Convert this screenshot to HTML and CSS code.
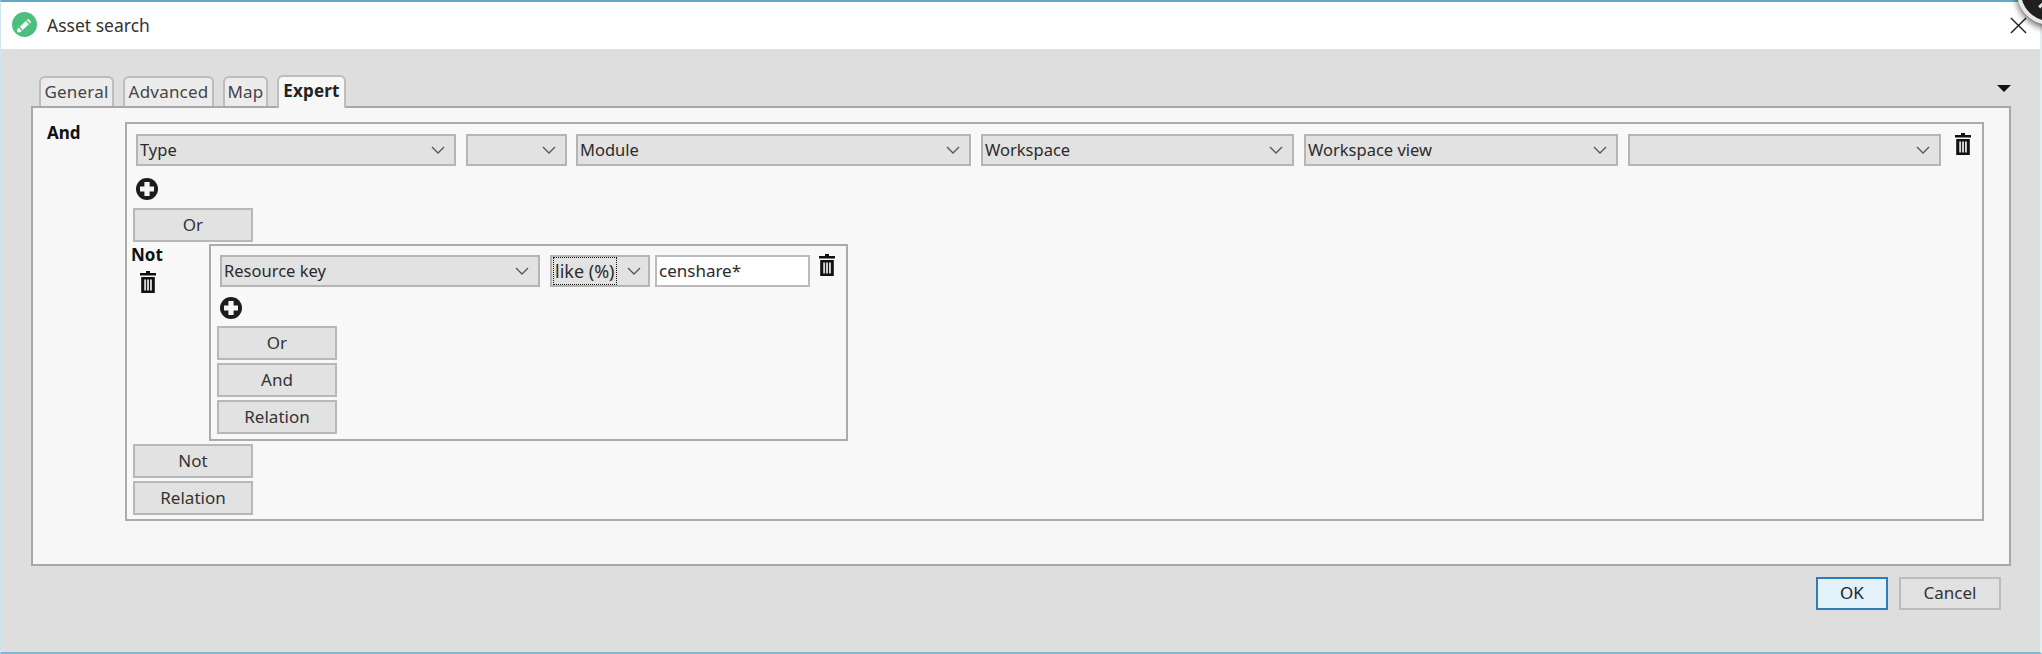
FILE: index.html
```html
<!DOCTYPE html>
<html lang="en">
<head>
<meta charset="utf-8">
<title>Asset search</title>
<link rel="stylesheet" href="styles.css">
</head>
<body>
<svg class="sprites" width="0" height="0" aria-hidden="true">
  <symbol id="trash" viewBox="0 0 18 22">
    <path d="M7 0h4v2h6v2.6H1V2h6z" fill="#111"/>
    <path d="M2.2 6h13.6v16H2.2z" fill="#111"/>
    <path d="M5.2 8.6h1.9v11H5.2zM8.1 8.6h1.9v11H8.1zM11 8.6h1.9v11H11z" fill="#d9d9d9"/>
  </symbol>
  <symbol id="plus" viewBox="0 0 22 22">
    <circle cx="11" cy="11" r="11" fill="#1c1c1c"/>
    <path d="M8.4 4h5.2v4.4H18v5.2h-4.4V18H8.4v-4.4H4V8.4h4.4z" fill="#f5f5f5"/>
  </symbol>
  <symbol id="chev" viewBox="0 0 14 8">
    <path d="M1 1l6 6 6-6" fill="none" stroke="#555" stroke-width="1.3"/>
  </symbol>
</svg>
<div class="badge"><span class="badge-mark"></span></div>
<main class="window">
  <header class="titlebar">
    <svg class="app-icon" viewBox="0 0 24 24" aria-hidden="true">
      <circle cx="12" cy="12" r="12" fill="#4cbf7f"/>
      <path d="M5 16.5 15.5 6.5l3 3L8 19.5H5z" fill="#f4fbf6"/>
      <path d="M13.8 8.2l3 3" stroke="#4cbf7f" stroke-width="1.4"/>
      <path d="M7 14.6l2.8 3" stroke="#6a8a78" stroke-width="1"/>
    </svg>
    <span class="title">Asset search</span>
    <svg class="close" viewBox="0 0 18 18" aria-hidden="true"><path d="M1 1l16 16M17 1L1 17" stroke="#222" stroke-width="1.5"/></svg>
  </header>
  <section class="content">
    <nav class="tabs">
      <span class="tab tab-general">General</span>
      <span class="tab tab-advanced">Advanced</span>
      <span class="tab tab-map">Map</span>
      <span class="tab tab-active">Expert</span>
      <span class="caret"></span>
    </nav>
    <div class="pane">
      <strong class="op-label and-label">And</strong>
      <div class="group outer">
        <div class="row">
          <div class="select w-type">Type<svg class="chev"><use href="#chev"/></svg></div>
          <div class="select w-op"><svg class="chev"><use href="#chev"/></svg></div>
          <div class="select w-module">Module<svg class="chev"><use href="#chev"/></svg></div>
          <div class="select w-ws">Workspace<svg class="chev"><use href="#chev"/></svg></div>
          <div class="select w-view">Workspace view<svg class="chev"><use href="#chev"/></svg></div>
          <div class="select w-last"><svg class="chev"><use href="#chev"/></svg></div>
          <svg class="trash"><use href="#trash"/></svg>
        </div>
        <svg class="plus"><use href="#plus"/></svg>
        <button class="btn first-btn">Or</button>
        <div class="not-block">
          <div class="not-side">
            <strong class="op-label">Not</strong>
            <svg class="trash side-trash"><use href="#trash"/></svg>
          </div>
          <div class="group inner">
            <div class="row">
              <div class="select w-key">Resource key<svg class="chev"><use href="#chev"/></svg></div>
              <div class="select w-like"><span class="focus">like (%)</span><svg class="chev"><use href="#chev"/></svg></div>
              <div class="input">censhare*</div>
              <svg class="trash"><use href="#trash"/></svg>
            </div>
            <svg class="plus"><use href="#plus"/></svg>
            <div class="stack inner-stack">
              <button class="btn">Or</button>
              <button class="btn">And</button>
              <button class="btn">Relation</button>
            </div>
          </div>
        </div>
        <div class="stack outer-stack">
          <button class="btn">Not</button>
          <button class="btn">Relation</button>
        </div>
      </div>
    </div>
    <footer class="actions">
      <button class="btn action primary">OK</button>
      <button class="btn action cancel">Cancel</button>
    </footer>
  </section>
</main>
</body>
</html>
```

FILE: styles.css
```css
* { box-sizing: border-box; }
html, body { margin: 0; height: 100%; }
body {
  width: 2042px;
  height: 654px;
  overflow: hidden;
  position: relative;
  background: #fff;
  font-family: "Noto Sans", "Liberation Sans", sans-serif;
  font-size: 16.5px;
  color: #222;
}
.sprites { position: absolute; }
.window {
  height: 654px;
  display: flex;
  flex-direction: column;
  border-top: 2px solid #62a9c6;
  border-bottom: 2px solid #7db9d3;
  border-left: 1px solid #cfe6ee;
  border-right: 2px solid #e4eff3;
}
.titlebar {
  height: 47px;
  flex: none;
  background: #fff;
  display: flex;
  align-items: center;
  padding: 0 13px 2px 11px;
}
.app-icon { width: 25px; height: 25px; flex: none; }
.title { margin-left: 10px; font-size: 17.5px; color: #333; }
.close { width: 17px; height: 17px; margin-left: auto; margin-top: 2px; }
.content {
  flex: 1;
  min-height: 0;
  background: #dedede;
  padding: 26px 0 0 30px;
}
.tabs {
  height: 31px;
  display: flex;
  align-items: flex-end;
  width: 1980px;
  position: relative;
  z-index: 1;
  margin-left: 8px;
}
.tab {
  height: 30px;
  background: #ececec;
  border: 2px solid #bdbdbd;
  border-bottom: 0;
  border-radius: 6px 6px 0 0;
  display: flex;
  align-items: center;
  justify-content: center;
  margin-right: 9px;
  padding-bottom: 2px;
  font-size: 17px;
  letter-spacing: .2px;
  color: #444;
}
.tab-general { width: 75px; }
.tab-advanced { width: 91px; }
.tab-map { width: 45px; }
.tab-active {
  width: 69px;
  height: 33px;
  margin-bottom: -2px;
  padding-bottom: 4px;
  background: #f7f7f7;
  font-weight: 700;
  color: #222;
}
.caret {
  margin-left: auto;
  margin-right: 8px;
  margin-bottom: 14px;
  border: 7px solid transparent;
  border-top: 7px solid #111;
  border-bottom: 0;
}
.pane {
  width: 1980px;
  height: 460px;
  background: #f7f7f7;
  border: 2px solid #a8a8a8;
  display: flex;
  padding: 14px 25px 0 14px;
}
.op-label { font-size: 17px; font-weight: 700; color: #111; line-height: 20px; }
.and-label { width: 78px; flex: none; margin-top: 1px; }
.group {
  border: 2px solid #ababab;
  background: #f8f8f8;
}
.outer {
  width: 1859px;
  height: 399px;
  padding: 10px 0 0 6px;
}
.row { display: flex; align-items: flex-start; }
.select {
  height: 32px;
  background: #e2e2e2;
  border: 2px solid #b5b5b5;
  display: flex;
  align-items: center;
  justify-content: space-between;
  padding: 0 9px 1px 2px;
  margin-right: 9px;
  color: #2b2b2b;
  flex: none;
}
.chev { width: 14px; height: 8px; flex: none; margin-left: auto; }
.w-type { width: 320px; margin-left: 3px; margin-right: 10px; }
.w-op { width: 101px; }
.w-module { width: 395px; margin-right: 10px; }
.w-ws { width: 313px; margin-right: 10px; }
.w-view { width: 314px; margin-right: 10px; }
.w-last { width: 313px; }
.trash { width: 18px; height: 22px; flex: none; margin-left: 4px; margin-top: -1px; }
.plus { display: block; width: 22px; height: 22px; margin: 12px 0 8px 3px; }
.btn {
  display: block;
  width: 120px;
  height: 34px;
  background: #e2e2e2;
  border: 2px solid #b8b8b8;
  font: inherit;
  font-size: 17px;
  color: #333;
  padding: 0 0 2px;
}
.first-btn { margin-bottom: 2px; }
.not-block { display: flex; }
.not-side { width: 78px; flex: none; margin-left: -2px; }
.not-side .op-label { display: block; margin-top: 1px; }
.side-trash { display: block; margin: 6px 0 0 8px; }
.inner {
  width: 639px;
  height: 197px;
  padding: 9px 0 0 8px;
}
.w-key { width: 320px; margin-left: 1px; margin-right: 10px; }
.w-like { width: 100px; margin-right: 5px; padding-left: 2px; padding-right: 7px; }
.focus {
  outline: 1px dotted #111;
  line-height: 26px;
  padding: 0 1px;
  font-size: 18px;
  white-space: nowrap;
}
.input {
  width: 155px;
  height: 32px;
  background: #fff;
  border: 2px solid #bbb;
  padding: 0 0 1px 2px;
  display: flex;
  align-items: center;
  font-size: 17px;
  color: #2b2b2b;
}
.inner .trash { margin-left: 8px; }
.inner .plus { margin: 10px 0 7px 1px; }
.stack { display: flex; flex-direction: column; gap: 3px; }
.inner-stack { margin-left: -2px; }
.outer-stack { margin-top: 3px; }
.actions {
  display: flex;
  justify-content: flex-end;
  gap: 11px;
  width: 1970px;
  margin-top: 11px;
}
.action { height: 33px; }
.primary { width: 72px; background: #e3f1fb; border-color: #2f7db8; color: #222; }
.cancel { width: 102px; background: #e1e1e1; border-color: #bcbcbc; }
.badge {
  position: absolute;
  top: -41px;
  right: -41px;
  width: 66px;
  height: 66px;
  border-radius: 50%;
  background: #1f1f1f;
  border: 4px solid #e8e8e8;
  box-shadow: 0 3px 7px rgba(0, 0, 0, .65);
  z-index: 2;
}
.badge-mark {
  position: absolute;
  left: 17px;
  top: 40px;
  width: 8px;
  height: 3px;
  background: #ddd;
  transform: rotate(-45deg);
}
```
